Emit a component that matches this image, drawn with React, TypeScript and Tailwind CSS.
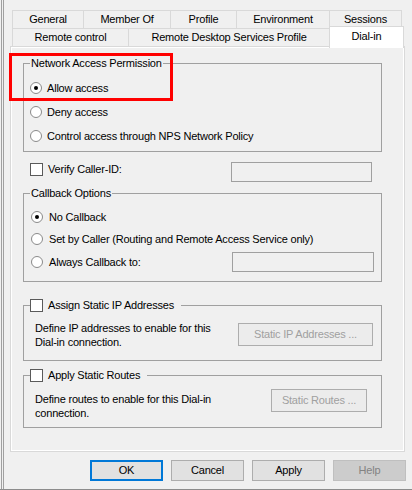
import React from "react";

function Radio({ checked }: { checked?: boolean }) {
  return (
    <span className="w-[12px] h-[12px] rounded-full border border-[#8a8a8a] bg-white flex items-center justify-center shrink-0">
      {checked ? <span className="w-[4px] h-[4px] rounded-full bg-black" /> : null}
    </span>
  );
}

function Check() {
  return <span className="w-[13px] h-[13px] border border-[#5a5a5a] bg-white shrink-0" />;
}

function Tab({ w, label, last }: { w: string; label: string; last?: boolean }) {
  return (
    <div
      className={`${w} h-full border-l border-t border-[#d9d9d9] bg-[#f0f0f0] flex items-center justify-center ${
        last ? "border-r" : ""
      }`}
    >
      {label}
    </div>
  );
}

export default function App() {
  return (
    <div className="relative w-[412px] h-[490px] bg-[#f0f0f0] flex border-b border-[#8c8c8c] text-[11px] leading-[13px] tracking-[-0.2px] text-black font-['Liberation_Sans',Arial,sans-serif] overflow-hidden">
      <div className="ml-[1px] w-[3px] border-x border-[#a0a0a0]" />
      <div className="flex flex-col pl-[6px] pt-[10px]">
        {/* Tabs */}
        <div className="flex h-[18px] ml-[2px]">
          <Tab w="w-[71px]" label="General" />
          <Tab w="w-[87px]" label="Member Of" />
          <Tab w="w-[66px]" label="Profile" />
          <Tab w="w-[93px]" label="Environment" />
          <Tab w="w-[73px]" label="Sessions" last />
        </div>
        <div className="flex h-[18px] ml-[2px]">
          <Tab w="w-[116px]" label="Remote control" />
          <Tab w="w-[201px]" label="Remote Desktop Services Profile" />
          <div className="relative z-10 self-start -mt-[2px] w-[75px] h-[22px] bg-white border-x border-t border-[#d9d9d9] flex justify-center pt-[3px]">
            Dial-in
          </div>
        </div>

        {/* Panel */}
        <div className="w-[395px] h-[406px] border border-[#d9d9d9] bg-white p-[1px]">
          <div className="h-full bg-[#f0f0f0] flex flex-col pl-[11px]">
            {/* Network Access Permission */}
            <fieldset className="mt-[9px] w-[359px] border border-[#a0a0a0] pt-[6px] pb-[3px]">
              <legend className="ml-[6px] px-[1px]">Network Access Permission</legend>
              <div className="flex flex-col pl-[6px]">
                <div className="h-[24px] flex items-center gap-[5px]">
                  <Radio checked />
                  <span>Allow access</span>
                </div>
                <div className="h-[24px] flex items-center gap-[5px]">
                  <Radio />
                  <span>Deny access</span>
                </div>
                <div className="h-[24px] flex items-center gap-[5px]">
                  <Radio />
                  <span>Control access through NPS Network Policy</span>
                </div>
              </div>
            </fieldset>

            {/* Verify Caller-ID */}
            <div className="mt-[10px] ml-[7px] flex items-start h-[20px]">
              <div className="w-[201px] mt-[1px] flex items-center gap-[5px]">
                <Check />
                <span>Verify Caller-ID:</span>
              </div>
              <div className="w-[141px] h-[20px] border border-[#a0a0a0] bg-[#f0f0f0]" />
            </div>

            {/* Callback Options */}
            <fieldset className="mt-[5px] w-[359px] border border-[#a0a0a0] pt-[6px] pb-[7px]">
              <legend className="ml-[6px] px-[1px]">Callback Options</legend>
              <div className="flex flex-col pl-[7px]">
                <div className="h-[22px] flex items-center gap-[6px]">
                  <Radio checked />
                  <span>No Callback</span>
                </div>
                <div className="h-[22px] flex items-center gap-[6px]">
                  <Radio />
                  <span>Set by Caller (Routing and Remote Access Service only)</span>
                </div>
                <div className="h-[24px] flex items-center">
                  <div className="w-[201px] flex items-center gap-[6px]">
                    <Radio />
                    <span>Always Callback to:</span>
                  </div>
                  <div className="w-[142px] h-[20px] border border-[#a0a0a0] bg-[#f0f0f0]" />
                </div>
              </div>
            </fieldset>

            {/* Assign Static IP Addresses */}
            <fieldset className="mt-[17px] w-[359px] border border-[#a0a0a0] pt-[9px] pb-[11px]">
              <legend className="ml-[6px] pr-[7px]">
                <span className="flex items-center gap-[5px]">
                  <Check />
                  <span>Assign Static IP Addresses</span>
                </span>
              </legend>
              <div className="flex items-start pl-[11px] h-[28px]">
                <div className="w-[203px] leading-[14px]">
                  Define IP addresses to enable for this
                  <br />
                  Dial-in connection.
                </div>
                <div className="mt-[2px] w-[135px] h-[23px] border border-[#adadad] bg-[#ececec] text-[#a0a0a0] flex items-center justify-center">
                  Static IP Addresses ...
                </div>
              </div>
            </fieldset>

            {/* Apply Static Routes */}
            <fieldset className="mt-[8px] w-[359px] border border-[#a0a0a0] pt-[7px] pb-[7px]">
              <legend className="ml-[6px] pr-[7px]">
                <span className="flex items-center gap-[5px]">
                  <Check />
                  <span>Apply Static Routes</span>
                </span>
              </legend>
              <div className="flex items-start pl-[11px] h-[31px]">
                <div className="mt-[3px] w-[236px] leading-[14px]">
                  Define routes to enable for this Dial-in
                  <br />
                  connection.
                </div>
                <div className="w-[96px] h-[23px] border border-[#adadad] bg-[#ececec] text-[#a0a0a0] flex items-center justify-center">
                  Static Routes ...
                </div>
              </div>
            </fieldset>
          </div>
        </div>

        {/* Dialog buttons */}
        <div className="mt-[8px] pl-[80px] flex gap-[8px]">
          <div className="w-[73px] h-[21px] border-2 border-[#0078d7] bg-[#e1e1e1] flex items-center justify-center">
            OK
          </div>
          <div className="w-[73px] h-[21px] border border-[#adadad] bg-[#e1e1e1] flex items-center justify-center">
            Cancel
          </div>
          <div className="w-[73px] h-[21px] border border-[#adadad] bg-[#e1e1e1] flex items-center justify-center">
            Apply
          </div>
          <div className="w-[73px] h-[21px] border border-[#bfbfbf] bg-[#cccccc] text-[#838383] flex items-center justify-center">
            Help
          </div>
        </div>
      </div>

      {/* Red highlight annotation */}
      <div className="absolute left-[9px] top-[53px] w-[164px] h-[48px] border-[3px] border-[#ff0000]" />
    </div>
  );
}
